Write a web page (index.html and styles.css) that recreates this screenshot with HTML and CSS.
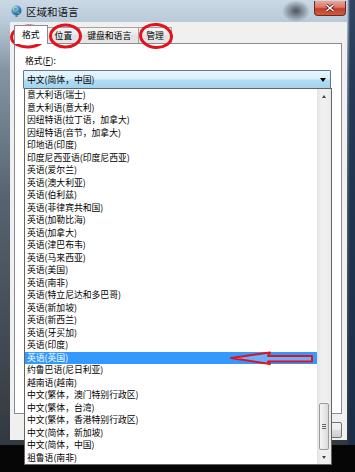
FILE: index.html
```html
<!DOCTYPE html>
<html lang="zh-CN">
<head>
    <meta charset="UTF-8">
    <meta name="viewport" content="width=device-width, initial-scale=1.0">
    <title>区域和语言</title>
    <link rel="stylesheet" href="styles.css">
</head>
<body>
    <div class="window">
        <div class="titlebar">
            <svg class="title-icon" width="11" height="12" viewBox="0 0 11 12">
                <defs>
                    <radialGradient id="globe" cx="0.35" cy="0.3" r="0.8">
                        <stop offset="0" stop-color="#d8f0ff"/>
                        <stop offset="0.5" stop-color="#3d8fd0"/>
                        <stop offset="1" stop-color="#1d4f86"/>
                    </radialGradient>
                </defs>
                <circle cx="5.5" cy="5.5" r="5" fill="url(#globe)"/>
                <path d="M3 3 Q5 2 6 4 Q5 6 3.5 6 Z" fill="#5fb04a"/>
                <path d="M6.5 7 Q9 6.5 9 8.5 Q7.5 9.5 6.5 8.5 Z" fill="#5fb04a"/>
                <rect x="4.5" y="10" width="2" height="2" fill="#6a7a88"/>
            </svg>
            <span class="title-text">区域和语言</span>
            <div class="close-btn">
                <svg width="10" height="8" viewBox="0 0 10 8">
                    <path d="M1.5 1 L8.5 7 M8.5 1 L1.5 7" stroke="#5a1a10" stroke-width="3"/>
                    <path d="M1.5 1 L8.5 7 M8.5 1 L1.5 7" stroke="#fff" stroke-width="1.6"/>
                </svg>
            </div>
        </div>
        <div class="client">
            <div class="tabs">
                <div class="tab active">格式</div>
                <div class="tab">位置</div>
                <div class="tab">键盘和语言</div>
                <div class="tab">管理</div>
            </div>
            <div class="panel">
                <div class="field-label">格式(<u>F</u>):</div>
                <div class="combo">
                    <span>中文(简体，中国)</span>
                    <span class="combo-arrow"></span>
                </div>
            </div>
            <div class="buttons">
                <button>确定</button>
                <button>取消</button>
                <button>应用(A)</button>
            </div>
        </div>
    </div>

    <!-- opened format list -->
    <div class="dropdown">
        <ul class="dropdown-items">
            <li>意大利语(瑞士)</li>
            <li>意大利语(意大利)</li>
            <li>因纽特语(拉丁语，加拿大)</li>
            <li>因纽特语(音节，加拿大)</li>
            <li>印地语(印度)</li>
            <li>印度尼西亚语(印度尼西亚)</li>
            <li>英语(爱尔兰)</li>
            <li>英语(澳大利亚)</li>
            <li>英语(伯利兹)</li>
            <li>英语(菲律宾共和国)</li>
            <li>英语(加勒比海)</li>
            <li>英语(加拿大)</li>
            <li>英语(津巴布韦)</li>
            <li>英语(马来西亚)</li>
            <li>英语(美国)</li>
            <li>英语(南非)</li>
            <li>英语(特立尼达和多巴哥)</li>
            <li>英语(新加坡)</li>
            <li>英语(新西兰)</li>
            <li>英语(牙买加)</li>
            <li>英语(印度)</li>
            <li class="selected">英语(英国)</li>
            <li>约鲁巴语(尼日利亚)</li>
            <li>越南语(越南)</li>
            <li>中文(繁体，澳门特别行政区)</li>
            <li>中文(繁体，台湾)</li>
            <li>中文(繁体，香港特别行政区)</li>
            <li>中文(简体，新加坡)</li>
            <li>中文(简体，中国)</li>
            <li>祖鲁语(南非)</li>
        </ul>
        <div class="scrollbar">
            <div class="scroll-btn"><span class="arrow-up"></span></div>
            <div class="scroll-thumb"><span class="grip"></span></div>
            <div class="scroll-btn"><span class="arrow-down"></span></div>
        </div>
    </div>

    <!-- red marks drawn over the screenshot -->
    <svg class="marks" width="355" height="472" viewBox="0 0 355 472">
        <g fill="none" stroke="#e3131d" stroke-width="3">
            <ellipse cx="28.5" cy="36.5" rx="17" ry="10.5" transform="rotate(-4 28.5 36.5)"/>
            <ellipse cx="65.5" cy="36" rx="15" ry="11"/>
            <ellipse cx="156" cy="36" rx="15.5" ry="11.5" transform="rotate(5 156 36)"/>
        </g>
        <polygon points="231,358 270,352.5 268,356 312,356 312,361.5 268,361.5 270,364" fill="rgba(255,255,255,0.25)" stroke="#e3131d" stroke-width="2" stroke-linejoin="round"/>
    </svg>
</body>
</html>
```

FILE: styles.css
```css
body {
    margin: 0;
    width: 355px;
    height: 472px;
    overflow: hidden;
    position: relative;
    background: #060606;
    font-family: "Noto Sans CJK SC", "Noto Sans", sans-serif;
    font-size: 8.8px;
    color: #000;
}
.window {
    width: 355px;
    height: 445px;
    box-sizing: border-box;
    padding: 0 8px 5px 10px;
    display: flex;
    flex-direction: column;
    background:
        radial-gradient(ellipse 14px 11px at 296px 11px, rgba(55, 60, 70, 0.85), rgba(55, 60, 70, 0) 100%),
        linear-gradient(to right, rgba(0, 0, 0, 0) 347px, rgba(22, 44, 74, 0.85) 350px),
        linear-gradient(to bottom, #cbd9e6 0, #b8c9d8 22px, #8494a3 70px, #56626e 200px, #32383f 445px);
}
.titlebar {
    height: 22px;
    display: flex;
    align-items: center;
    gap: 4px;
}
.title-icon {
    margin-left: 1px;
}
.title-text {
    font-size: 10.5px;
    color: #111;
}
.close-btn {
    margin-left: auto;
    margin-right: 1px;
    align-self: flex-start;
    margin-top: 1px;
    width: 32px;
    height: 15px;
    box-sizing: border-box;
    border: 1px solid #6b2a20;
    border-top: none;
    border-radius: 0 0 4px 4px;
    background: linear-gradient(#e9a89c 0%, #d8766a 45%, #c2402c 55%, #d35a3f 100%);
    display: flex;
    align-items: center;
    justify-content: center;
}
.client {
    flex: 1;
    background: #f0f0f0;
    padding: 3px 5px 0 4px;
    display: flex;
    flex-direction: column;
}
.tabs {
    display: flex;
    align-items: flex-end;
    height: 18px;
}
.tab {
    height: 15px;
    line-height: 15px;
    padding: 0 7px;
    border: 1px solid #a3a3a3;
    border-bottom: none;
    margin-left: -1px;
    background: linear-gradient(#f6f6f6, #e8e8e8 50%, #e0e0e0 50%, #e6e6e6);
}
.tab.active {
    height: 18px;
    line-height: 17px;
    margin-left: 0;
    margin-bottom: -1px;
    padding: 0 7px;
    background: #fff;
    border-color: #898c95;
    position: relative;
    z-index: 1;
}
.panel {
    height: 371px;
    box-sizing: border-box;
    border: 1px solid #898c95;
    background: #fff;
    padding: 11px 0 0 9px;
}
.field-label {
    line-height: 12px;
    padding-left: 1px;
    margin-bottom: 3px;
}
.combo {
    width: 308px;
    height: 19px;
    margin-left: -1px;
    box-sizing: border-box;
    border: 1px solid #5c7a94;
    border-radius: 1px;
    padding: 0 4px 0 3px;
    display: flex;
    align-items: center;
    justify-content: space-between;
    background: linear-gradient(#e9f5fc 0%, #d8effb 48%, #b2dcf4 52%, #a2d3f0 100%);
}
.combo-arrow {
    width: 0;
    height: 0;
    border-left: 3px solid transparent;
    border-right: 3px solid transparent;
    border-top: 4px solid #000;
}
.buttons {
    display: flex;
    justify-content: flex-end;
    gap: 5px;
    margin-top: 8px;
}
.buttons button {
    width: 55px;
    height: 16px;
    padding: 0;
    font-family: inherit;
    font-size: 8.8px;
    border: 1px solid #707070;
    border-radius: 2px;
    background: linear-gradient(#f2f2f2, #ebebeb 50%, #dddddd 50%, #cfcfcf);
}
.dropdown {
    position: absolute;
    left: 24px;
    top: 88px;
    width: 308px;
    height: 377px;
    box-sizing: border-box;
    border: 1px solid #646464;
    background: #fff;
    display: flex;
}
.dropdown-items {
    list-style: none;
    margin: 0;
    padding: 0;
    flex: 1;
}
.dropdown-items li {
    height: 12.5px;
    line-height: 12.5px;
    padding-left: 2px;
    white-space: nowrap;
}
.dropdown-items li.selected {
    background: #3399ff;
    color: #fff;
}
.scrollbar {
    width: 14px;
    display: flex;
    flex-direction: column;
    background: linear-gradient(to right, #e3e3e3, #efefef 30%, #efefef 80%, #e6e6e6);
}
.scroll-btn {
    height: 14px;
    display: flex;
    align-items: center;
    justify-content: center;
}
.arrow-up {
    width: 0;
    height: 0;
    border-left: 2.5px solid transparent;
    border-right: 2.5px solid transparent;
    border-bottom: 3px solid #444;
}
.arrow-down {
    width: 0;
    height: 0;
    border-left: 2.5px solid transparent;
    border-right: 2.5px solid transparent;
    border-top: 3px solid #444;
}
.scroll-thumb {
    margin: auto 2px 0 2px;
    height: 47px;
    box-sizing: border-box;
    border: 1px solid #9b9b9b;
    border-radius: 2px;
    background: linear-gradient(to right, #f4f4f4, #e9e9e9 50%, #dadada);
    display: flex;
    align-items: center;
    justify-content: center;
}
.grip {
    width: 4px;
    height: 5px;
    background: repeating-linear-gradient(#666 0, #666 1px, transparent 1px, transparent 2px);
}
.marks {
    position: absolute;
    left: 0;
    top: 0;
    pointer-events: none;
}
```
